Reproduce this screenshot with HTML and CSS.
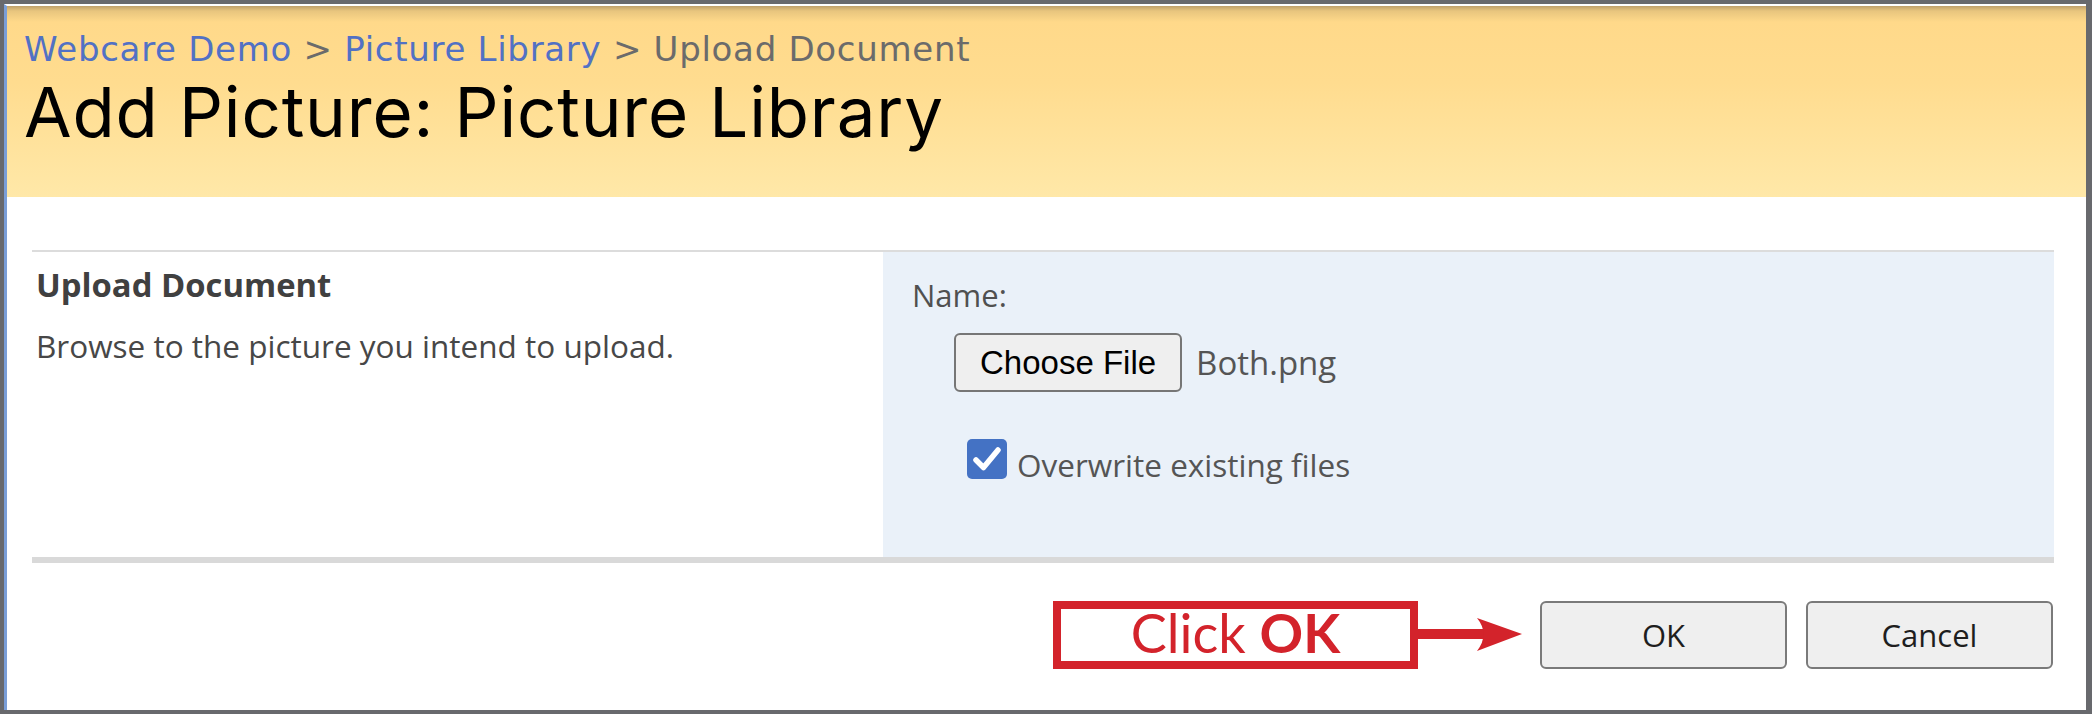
FILE: index.html
```html
<!DOCTYPE html>
<html lang="en">
<head>
    <meta charset="UTF-8">
    <title>Add Picture: Picture Library</title>
    <link rel="stylesheet" href="styles.css">
</head>
<body>
    <div class="frame">
        <header class="title-area">
            <div class="breadcrumb">
                <a href="#">Webcare Demo</a><span class="sep">&gt;</span><a href="#">Picture Library</a><span class="sep">&gt;</span><span class="current">Upload Document</span>
            </div>
            <h1 class="page-title">Add Picture: Picture Library</h1>
        </header>

        <div class="content">
            <div class="form-table">
                <div class="form-label-col">
                    <h3>Upload Document</h3>
                    <p>Browse to the picture you intend to upload.</p>
                </div>
                <div class="form-body-col">
                    <div class="field-label">Name:</div>
                    <div class="file-row">
                        <span class="file-btn">Choose File</span>
                        <span class="file-name">Both.png</span>
                    </div>
                    <label class="overwrite">
                        <span class="checkbox">
                            <svg width="40" height="40" viewBox="0 0 40 40">
                                <path d="M9 21 L16.5 28.5 L31 11" fill="none" stroke="#fff" stroke-width="5.5" stroke-linecap="round" stroke-linejoin="round"/>
                            </svg>
                        </span>
                        <span class="overwrite-text">Overwrite existing files</span>
                    </label>
                </div>
            </div>

            <div class="button-row">
                <div class="callout">Click&nbsp;<b>OK</b></div>
                <svg class="callout-arrow" width="104" height="68" viewBox="0 0 104 68">
                    <rect x="0" y="28" width="72" height="10" fill="#d3232b"/>
                    <path d="M59 17 L104 33 L59 50 Q72 33 59 17 Z" fill="#d3232b"/>
                </svg>
                <button class="btn">OK</button>
                <button class="btn">Cancel</button>
            </div>
        </div>
    </div>
</body>
</html>
```

FILE: styles.css
```css
* {
    margin: 0;
    padding: 0;
    box-sizing: border-box;
}

html, body {
    height: 100%;
}

body {
    background: #68696d;
    font-family: "Open Sans", "Noto Sans", sans-serif;
    padding: 4px 6px 4px 4px;
}

.frame {
    height: 100%;
    background: #fff;
    border-left: 3px solid #7a9ed8;
    border-top: 2px solid #fff;
    overflow: hidden;
}

/* yellow title strip */
.title-area {
    height: 191px;
    padding: 23px 0 0 17px;
    background: linear-gradient(to bottom, #bfa06a 0, #e8c57e 5px, #ffd98a 16px, #ffdc8f 40%, #ffe8a8 100%);
}

.breadcrumb {
    font-family: "DejaVu Sans", Verdana, sans-serif;
    font-size: 34px;
    line-height: 40px;
    letter-spacing: 0.7px;
    color: #6b6b6b;
    white-space: nowrap;
}

.breadcrumb a {
    color: #5271c4;
    text-decoration: none;
}

.breadcrumb .sep {
    margin: 0 11.5px;
}

.page-title {
    font-family: Inter, "Open Sans", sans-serif;
    font-weight: normal;
    font-size: 69px;
    line-height: 80px;
    letter-spacing: 0.85px;
    margin-top: 3px;
    color: #000;
    white-space: nowrap;
}

.content {
    padding: 53px 32px 0 25px;
}

.form-table {
    display: flex;
    border-top: 2px solid #dcdcdc;
    border-bottom: 6px solid #d9d9d9;
}

.form-label-col {
    width: 851px;
    padding: 13px 0 0 4px;
}

.form-label-col h3 {
    font-size: 32.8px;
    line-height: 40px;
    font-weight: bold;
    color: #404040;
}

.form-label-col p {
    font-size: 31.5px;
    line-height: 40px;
    color: #474747;
    margin-top: 21px;
}

.form-body-col {
    flex: 1;
    background: #eaf1f9;
    padding: 23px 0 72px 29px;
}

.field-label {
    font-size: 31px;
    line-height: 40px;
    color: #505050;
}

.file-row {
    display: flex;
    align-items: center;
    margin: 18px 0 0 42px;
}

.file-btn {
    height: 59px;
    padding: 0 24px;
    border: 2px solid #767676;
    border-radius: 6px;
    background: #efefef;
    font-family: "Liberation Sans", Arial, sans-serif;
    font-size: 33px;
    color: #000;
    display: flex;
    align-items: center;
}

.file-name {
    margin-left: 14px;
    font-size: 33px;
    color: #555;
}

.overwrite {
    display: flex;
    align-items: flex-start;
    margin: 47px 0 0 55px;
    font-size: 31.5px;
    line-height: 40px;
    color: #555;
}

.checkbox {
    width: 40px;
    height: 40px;
    border-radius: 5px;
    background: #4472c4;
    margin-right: 10px;
}

.checkbox svg {
    display: block;
}

.overwrite-text {
    margin-top: 6px;
}

.button-row {
    display: flex;
    justify-content: flex-end;
    align-items: center;
    margin-top: 38px;
    padding-right: 1px;
}

.callout {
    width: 365px;
    height: 68px;
    border: 8px solid #d3232b;
    display: flex;
    align-items: center;
    justify-content: center;
    padding-bottom: 6px;
    font-family: Lato, "Open Sans", sans-serif;
    font-size: 54px;
    color: #d3232b;
}

.callout-arrow {
    display: block;
    margin-right: 18px;
}

.btn {
    width: 247px;
    height: 68px;
    border: 2px solid #7a7a7a;
    border-radius: 6px;
    background: #efefef;
    font-family: "Open Sans", sans-serif;
    font-size: 31px;
    color: #1e1e1e;
}

.btn + .btn {
    margin-left: 19px;
}
```
